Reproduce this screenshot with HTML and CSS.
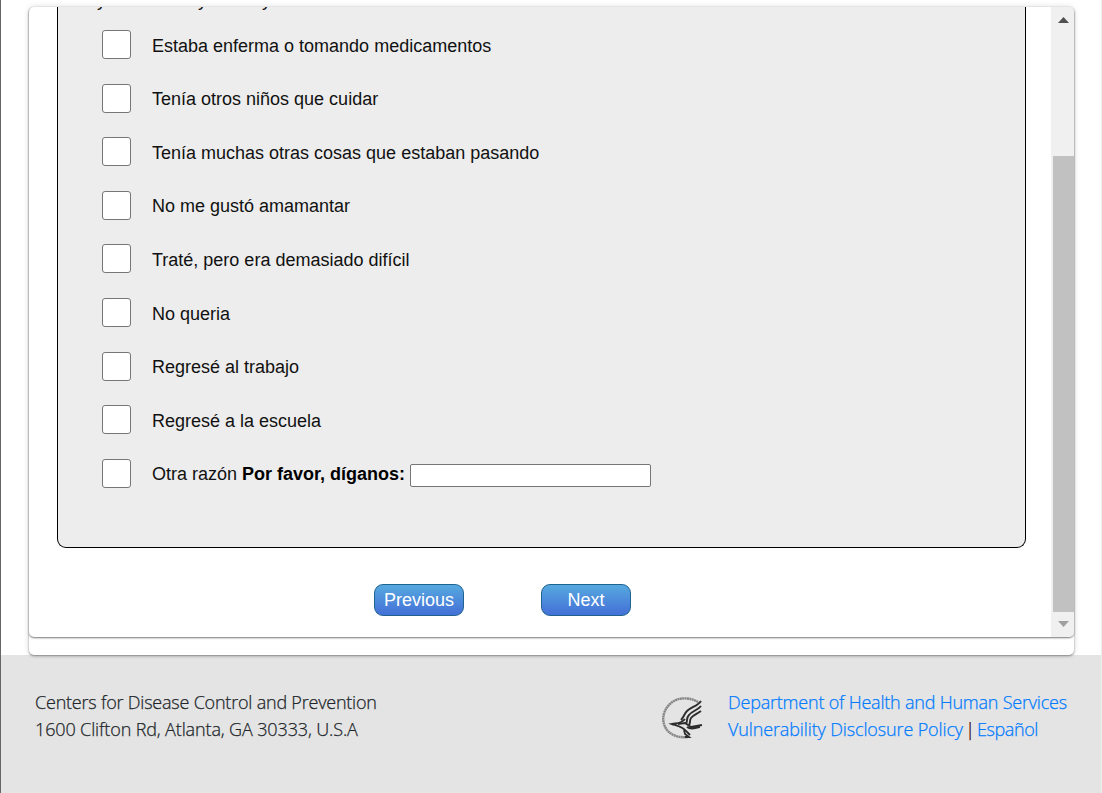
FILE: index.html
```html
<!DOCTYPE html>
<html lang="es">
<head>
<meta charset="utf-8">
<title>Encuesta</title>
<link rel="stylesheet" href="styles.css">
</head>
<body>
<div class="page">
  <main class="outer">
    <section class="viewport">
      <div class="content">
        <div class="question">
          <p class="prompt"><span>y</span><span>y</span><span>y</span></p>
          <label class="option"><span class="box"></span><span class="text">Estaba enferma o tomando medicamentos</span></label>
          <label class="option"><span class="box"></span><span class="text">Tenía otros niños que cuidar</span></label>
          <label class="option"><span class="box"></span><span class="text">Tenía muchas otras cosas que estaban pasando</span></label>
          <label class="option"><span class="box"></span><span class="text">No me gustó amamantar</span></label>
          <label class="option"><span class="box"></span><span class="text">Traté, pero era demasiado difícil</span></label>
          <label class="option"><span class="box"></span><span class="text">No queria</span></label>
          <label class="option"><span class="box"></span><span class="text">Regresé al trabajo</span></label>
          <label class="option"><span class="box"></span><span class="text">Regresé a la escuela</span></label>
          <div class="option"><span class="box"></span><span class="text">Otra razón <b>Por favor, díganos:</b></span><input class="other" type="text"></div>
        </div>
        <div class="actions"><button class="btn">Previous</button><button class="btn">Next</button></div>
      </div>
      <div class="scrollbar">
        <svg class="arrow up" viewBox="0 0 11 6"><path d="M0 6L5.5 0L11 6Z"/></svg>
        <div class="thumb"></div>
        <svg class="arrow down" viewBox="0 0 11 6"><path d="M0 0H11L5.5 6Z"/></svg>
      </div>
    </section>
  </main>
  <footer class="footer">
    <div class="address"><div class="tight">Centers for Disease Control and Prevention</div><div class="snug">1600 Clifton Rd, Atlanta, GA 30333, U.S.A</div></div>
    <svg class="seal" viewBox="0 0 44 44" fill="none" stroke="#2c2c2c">
      <path d="M37 6C29 1 17 1 10 7C1 15 0 26 6 34C11 40 19 42 27 41" stroke="#858585" stroke-width="2.4" stroke-dasharray="2 .4"/>
      <path d="M40 5C37 10 30 11 26 15C23 18 23 21 20 24M40 10C37 14 31 15 28 19C25 22 27 24 25 28M40 15C36 18 32 19 30 22C28 25 30 26 28 29" stroke-width="1.9"/>
      <path d="M24 23C20 28 16 27 11 28C17 30 22 31 25 35L29 39" stroke-width="1.9"/>
      <path d="M17 28L24 27L30 31L41 29M26 31C31 35 35 31 39 31M23 34L24 38L28 41H24" stroke-width="1.8"/>
    </svg>
    <div class="links"><div class="tight"><a>Department of Health and Human Services</a></div><div class="snug"><a>Vulnerability Disclosure Policy</a><span class="bar">|</span><a class="lang">Español</a></div></div>
  </footer>
</div>
</body>
</html>
```
FILE: styles.css
```css
* { box-sizing: border-box; }
body { margin: 0; background: #fff; font-family: "Liberation Sans", Arial, sans-serif; font-size: 18px; color: #111; overflow: hidden; }
.page { height: 793px; display: flex; flex-direction: column; border-left: 1px solid #666; border-right: 1px solid #eee; padding-top: 7px; }
.outer { position: relative; width: 1045px; height: 648px; margin-left: 28px; background: #fff; border-radius: 5px; box-shadow: 0 1px 2px #888, 0 0 6px rgba(0,0,0,.14); flex: none; z-index: 1; clip-path: inset(-7px -8px -4px -8px); }
.viewport { display: flex; height: 630px; overflow: hidden; border-radius: 5px; box-shadow: 0 1px 2px #777; }
.content { flex: 1; padding-left: 28px; }
.question { width: 969px; height: 541px; border: 1px solid #000; border-top: 0; border-radius: 0 0 9px 9px; background: #ededed; padding-left: 44px; }
.prompt { display: flex; margin: 0 0 0 -5px; height: 10.8px; line-height: 20px; gap: 91px; overflow: hidden; }
.prompt span { width: 10px; margin-top: -17px; }
.prompt span + span + span { margin-left: -37px; }
.option { display: flex; align-items: center; height: 53.6px; }
.text { padding-top: 3px; }
.text b { color: #000; }
.box { width: 29px; height: 29px; margin-right: 21px; background: #fff; border: 1px solid #767676; border-radius: 3px; }
.other { width: 241px; height: 23px; margin: 4px 0 0 5px; border: 1px solid #767676; border-radius: 2px; background: #fff; }
.actions { display: flex; gap: 77px; padding: 36px 0 0 317px; }
.btn { width: 90px; height: 32px; padding: 0; border: 1px solid #1f6391; border-radius: 9px; background: linear-gradient(#56a9df, #446fd7); color: #fff; font: 18px "Liberation Sans", Arial, sans-serif; }
.scrollbar { width: 23px; background: #f0f0f0; display: flex; flex-direction: column; align-items: center; padding-top: 10px; }
.arrow { width: 11px; height: 6px; flex: none; margin-left: 2px; }
.up { fill: #505050; }
.down { fill: #a0a0a0; margin-top: 9px; }
.thumb { width: 21px; height: 456px; margin: 133px 0 0 2px; background: #c1c1c1; flex: none; }
.footer { flex: 1; display: flex; align-items: flex-start; background: #e4e4e4; padding: 34px 0 0 34px; font-family: "Open Sans", "Noto Sans", sans-serif; font-weight: 300; line-height: 27px; white-space: nowrap; color: #212529; -webkit-text-stroke: .25px; }
.address { width: 626px; }
.tight { letter-spacing: -.21px; }
.snug { letter-spacing: -.13px; }
.seal { width: 44px; height: 44px; margin-top: 7px; -webkit-text-stroke: 0; }
.links { margin-left: 23px; }
.links a { color: #007bff; }
.bar { display: inline-block; width: 14px; text-align: center; color: #300; }
.links .lang { letter-spacing: -.4px; }
```
